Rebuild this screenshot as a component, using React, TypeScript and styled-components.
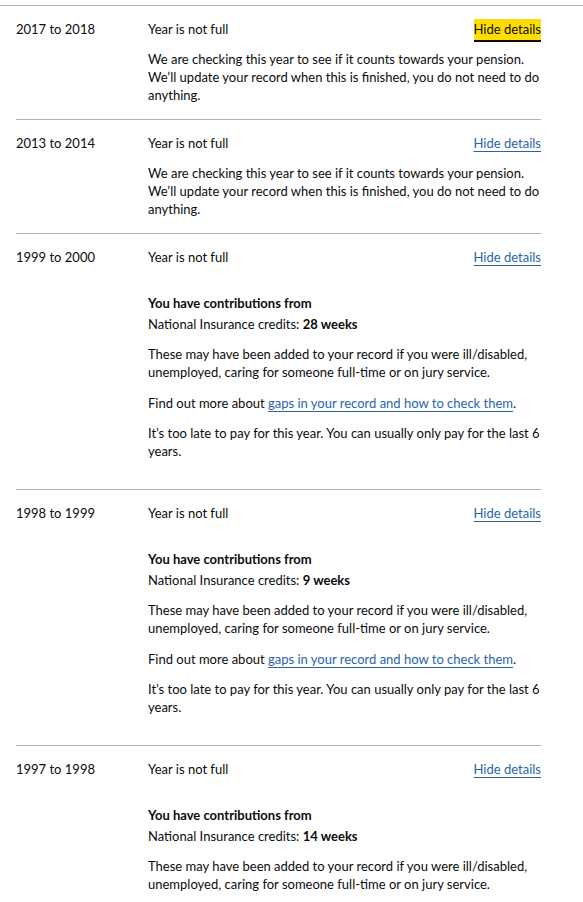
import React from "react";
import styled, { createGlobalStyle } from "styled-components";

const GlobalStyle = createGlobalStyle`
  html, body {
    margin: 0;
    padding: 0;
    background: #ffffff;
  }
  body {
    font-family: Lato, "Liberation Sans", Arial, sans-serif;
    font-size: 13px;
    line-height: 18px;
    color: #0b0c0c;
  }
`;

const Page = styled.div`
  padding-top: 5px;
`;

const TopRule = styled.hr`
  margin: 0;
  border: 0;
  border-top: 1px solid #b1b4b6;
`;

const List = styled.div`
  display: flex;
  flex-direction: column;
  padding: 0 42px 0 16px;
`;

const Row = styled.section<{ $extra?: boolean }>`
  display: grid;
  grid-template-columns: 132px 1fr auto;
  align-items: start;
  padding: 14px 0 ${(p) => (p.$extra ? 29 : 15)}px;
  border-bottom: 1px solid #b1b4b6;
`;

const Year = styled.div`
  grid-column: 1;
`;

const Status = styled.div`
  grid-column: 2;
`;

const Toggle = styled.a<{ $focused?: boolean }>`
  grid-column: 3;
  justify-self: end;
  color: ${(p) => (p.$focused ? "#0b0c0c" : "#2a64ab")};
  text-decoration: ${(p) => (p.$focused ? "none" : "underline")};
  text-decoration-thickness: 1px;
  text-underline-offset: 3px;
  cursor: pointer;
  background: ${(p) => (p.$focused ? "#ffdd00" : "transparent")};
  box-shadow: ${(p) =>
    p.$focused
      ? "0 -1px #ffdd00, 0 2px #ffdd00, 0 4px #0b0c0c"
      : "none"};
`;

const Details = styled.div`
  grid-column: 2 / 4;
  display: flex;
  flex-direction: column;
`;

const Para = styled.p<{ $gap?: number }>`
  margin: ${(p) => p.$gap ?? 12}px 0 0;
`;

const Heading = styled.h3`
  margin: 28px 0 0;
  font-size: 13px;
  line-height: 18px;
  font-weight: 700;
`;

const Strong = styled.strong`
  font-weight: 700;
`;

const Link = styled.a`
  color: #2a64ab;
  text-decoration: underline;
  text-decoration-thickness: 1px;
  text-underline-offset: 3px;
`;

type Entry = {
  year: string;
  focused?: boolean;
  weeks?: number;
};

const entries: Entry[] = [
  { year: "2017 to 2018", focused: true },
  { year: "2013 to 2014" },
  { year: "1999 to 2000", weeks: 28 },
  { year: "1998 to 1999", weeks: 9 },
  { year: "1997 to 1998", weeks: 14 },
];

function Checking() {
  return (
    <Details>
      <Para>
        We are checking this year to see if it counts towards your pension.
        We’ll update your record when this is finished, you do not need to do
        anything.
      </Para>
    </Details>
  );
}

function Contributions({ weeks }: { weeks: number }) {
  return (
    <Details>
      <Heading>You have contributions from</Heading>
      <Para $gap={3}>
        National Insurance credits: <Strong>{weeks} weeks</Strong>
      </Para>
      <Para>
        These may have been added to your record if you were ill/disabled,
        unemployed, caring for someone full-time or on jury service.
      </Para>
      <Para $gap={13}>
        Find out more about{" "}
        <Link href="#">gaps in your record and how to check them</Link>.
      </Para>
      <Para>
        It’s too late to pay for this year. You can usually only pay for the
        last 6 years.
      </Para>
    </Details>
  );
}

export default function App() {
  return (
    <>
      <GlobalStyle />
      <Page>
        <TopRule />
        <List>
          {entries.map((e) => (
            <Row key={e.year} $extra={e.weeks !== undefined}>
              <Year>{e.year}</Year>
              <Status>Year is not full</Status>
              <Toggle href="#" $focused={e.focused}>
                Hide details
              </Toggle>
              {e.weeks !== undefined ? (
                <Contributions weeks={e.weeks} />
              ) : (
                <Checking />
              )}
            </Row>
          ))}
        </List>
      </Page>
    </>
  );
}
